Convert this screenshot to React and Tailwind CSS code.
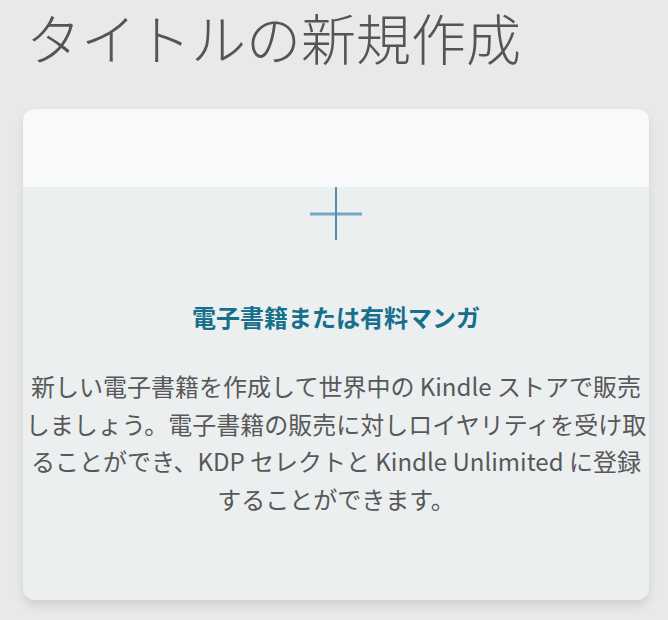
import React from "react";

const PlusIcon = () => (
  <svg width="52" height="54" viewBox="0 0 52 54" className="block">
    <line x1="1" y1="27" x2="51" y2="27" stroke="#74a9c2" strokeWidth="3" strokeLinecap="round" />
    <line x1="26" y1="0" x2="26" y2="53" stroke="#4b8fb1" strokeWidth="2" />
  </svg>
);

const bodyLines = [
  "新しい電子書籍を作成して世界中の Kindle ストアで販売",
  "しましょう。電子書籍の販売に対しロイヤリティを受け取",
  "ることができ、KDP セレクトと Kindle Unlimited に登録",
  "することができます。",
];

export default function App() {
  return (
    <div
      className="w-[668px] h-[620px] overflow-hidden bg-[#e9e9e9]"
      style={{ fontFamily: '"Noto Sans CJK JP", "Noto Sans", sans-serif' }}
    >
      {/* Page title */}
      <h1 className="pt-[3px] pl-[26px] text-[55px] leading-[66px] font-light text-[#555555] whitespace-nowrap">
        タイトルの新規作成
      </h1>

      {/* Create card */}
      <div className="mt-[40px] ml-[23px] w-[626px] h-[491px] rounded-[12px] overflow-hidden bg-[#ebeff0] shadow-[0_6px_10px_rgba(0,0,0,0.10)] flex flex-col">
        <div className="h-[78px] bg-[#f7f9fa] shrink-0" />
        <div className="flex flex-col items-center">
          <PlusIcon />
          <h2 className="mt-[58px] text-[24px] leading-[36px] font-bold text-[#176f8c] whitespace-nowrap">
            電子書籍または有料マンガ
          </h2>
          <p className="mt-[32px] text-[24px] leading-[37.5px] text-[#585858] text-center">
            {bodyLines.map((line) => (
              <span key={line} className="block whitespace-nowrap">
                {line}
              </span>
            ))}
          </p>
        </div>
      </div>
    </div>
  );
}
